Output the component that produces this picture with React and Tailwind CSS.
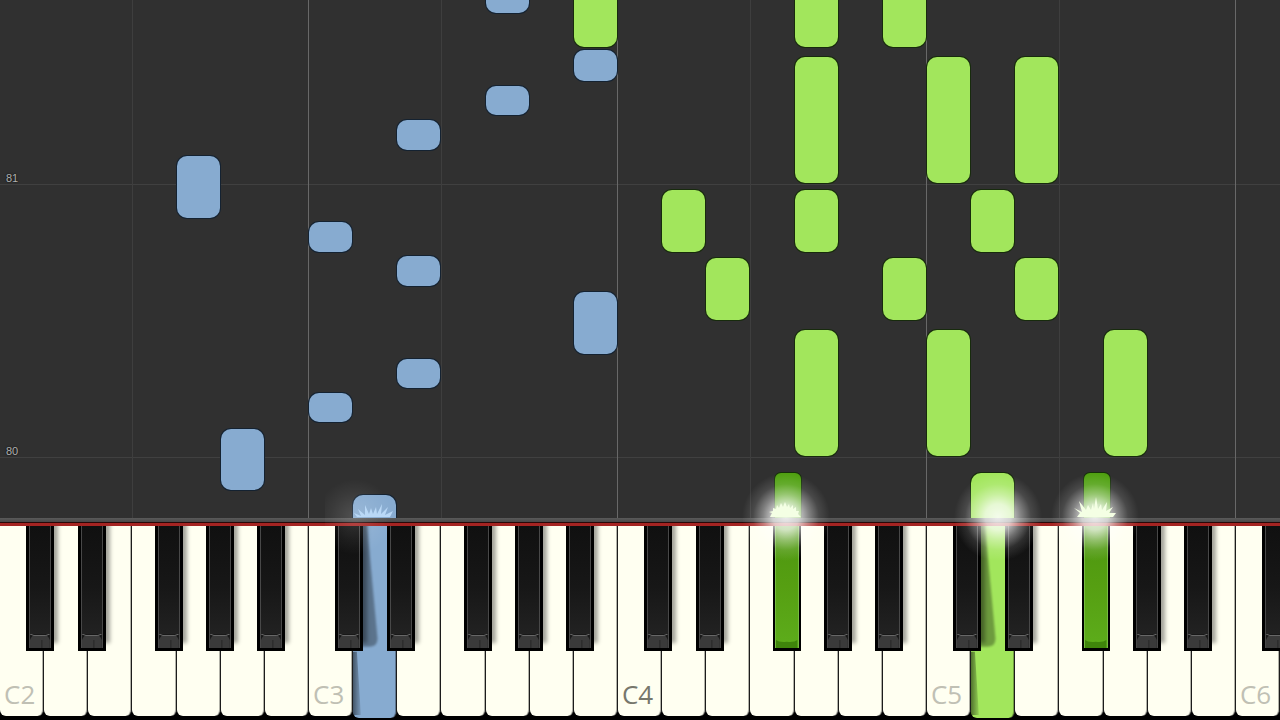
import React from 'react';

const KEY_COUNT = 29;
const LETTERS = ['C', 'D', 'E', 'F', 'G', 'A', 'B'];

const keys = Array.from({ length: KEY_COUNT }, (_, index) => ({
  index,
  letter: LETTERS[index % 7],
  octave: 2 + Math.floor(index / 7),
}));

// how far each black key is pushed over its white key
const SHARP_MARGIN = {
  C: 'ml-[59%]',
  D: 'ml-[77%]',
  F: 'ml-[52%]',
  G: 'ml-[67%]',
  A: 'ml-[83%]',
};

// bottom is the distance to the rail, in pixels
const notes = [
  { key: 11, bottom: 505, height: 40, hand: 'left' },
  { key: 13, bottom: 437, height: 31, hand: 'left' },
  { key: 11, bottom: 403, height: 29, hand: 'left' },
  { key: 9, bottom: 368, height: 30, hand: 'left' },
  { key: 4, bottom: 300, height: 62, hand: 'left' },
  { key: 7, bottom: 266, height: 30, hand: 'left' },
  { key: 9, bottom: 232, height: 30, hand: 'left' },
  { key: 13, bottom: 164, height: 62, hand: 'left' },
  { key: 9, bottom: 130, height: 29, hand: 'left' },
  { key: 7, bottom: 96, height: 29, hand: 'left' },
  { key: 5, bottom: 28, height: 61, hand: 'left' },
  { key: 8, bottom: -20, height: 43, hand: 'left' },
  { key: 13, bottom: 471, height: 80, hand: 'right' },
  { key: 18, bottom: 471, height: 80, hand: 'right' },
  { key: 20, bottom: 471, height: 80, hand: 'right' },
  { key: 18, bottom: 335, height: 126, hand: 'right' },
  { key: 21, bottom: 335, height: 126, hand: 'right' },
  { key: 23, bottom: 335, height: 126, hand: 'right' },
  { key: 15, bottom: 266, height: 62, hand: 'right' },
  { key: 18, bottom: 266, height: 62, hand: 'right' },
  { key: 22, bottom: 266, height: 62, hand: 'right' },
  { key: 16, bottom: 198, height: 62, hand: 'right' },
  { key: 20, bottom: 198, height: 62, hand: 'right' },
  { key: 23, bottom: 198, height: 62, hand: 'right' },
  { key: 18, bottom: 62, height: 126, hand: 'right' },
  { key: 21, bottom: 62, height: 126, hand: 'right' },
  { key: 25, bottom: 62, height: 126, hand: 'right' },
  { key: 22, bottom: -20, height: 65, hand: 'right' },
  { key: 17, bottom: -20, height: 65, hand: 'right', sharp: true },
  { key: 24, bottom: -20, height: 65, hand: 'right', sharp: true },
];

const pressedWhite = { 8: 'left', 22: 'right' };
const pressedBlack = [17, 24];

function Note({ note }) {
  let look = 'inset-x-[1%] rounded-[10px] bg-[#a2e65c] ring-[#172b0c]';
  if (note.hand === 'left') look = 'inset-x-[1%] rounded-[10px] bg-[#87abd0] ring-[#142231]';
  if (note.sharp) look = 'left-[56%] w-[58%] rounded-md bg-[#4fa010] ring-[#16300a]';

  return <div className={`absolute ring-1 ${look}`} style={{ bottom: note.bottom, height: note.height }} />;
}

function Lane({ item }) {
  let line = '';
  if (item.letter === 'B') line = 'border-r border-[#686868]';
  if (item.letter === 'E') line = 'border-r border-[#3e3e3e]';

  return (
    <div className={`relative flex-1 ${line}`}>
      {notes
        .filter((note) => note.key === item.index)
        .map((note, i) => (
          <Note key={i} note={note} />
        ))}
    </div>
  );
}

function Measure({ number }) {
  return (
    <div className="flex h-[273px] shrink-0 items-end border-b border-[#404040] pl-1.5 font-['Liberation_Sans'] text-[11px] leading-3 text-[#b0b0b0] [text-shadow:0_0_2px_#000]">
      {number}
    </div>
  );
}

function Roll() {
  return (
    <div className="relative min-h-0 flex-1 overflow-hidden bg-[#303030]">
      <div className="absolute inset-0 flex flex-col justify-end pb-[60px]">
        <Measure number="81" />
        <Measure number="80" />
      </div>
      <div className="flex h-full">
        {keys.map((item) => (
          <Lane key={item.index} item={item} />
        ))}
      </div>
    </div>
  );
}

function BlackKey({ letter, pressed }) {
  if (pressed) {
    return (
      <div className={`h-[125px] w-[62%] shrink-0 border-x-2 border-b-3 border-black bg-linear-to-b from-[#4c960f] via-[#569f12] to-[#5dad1b] ${SHARP_MARGIN[letter]}`}>
        <div className="flex h-full flex-col justify-end border-x border-[#76bd40]">
          <svg viewBox="0 0 20 9" preserveAspectRatio="none" className="h-2 w-full">
            <path d="M0 0Q3 3 10 2Q17 3 20 0V9H0Z" fill="#3f850b" />
          </svg>
        </div>
      </div>
    );
  }
  return (
    <div className={`h-[125px] w-[63%] shrink-0 border-x-3 border-b-3 border-black bg-linear-to-b from-[#101010] via-[#171717] to-[#252525] shadow-[5px_-7px_4px_-1px_rgba(0,0,0,0.36)] ${SHARP_MARGIN[letter]}`}>
      <div className="flex h-full flex-col justify-end border-x border-[#484848]">
        <svg viewBox="0 0 20 14" preserveAspectRatio="none" className="h-3.5 w-full">
          <path d="M0 0H20V14H0Z" fill="#181818" />
          <path d="M0 14V6Q2 1 5 1H15Q18 1 20 6V14Z" fill="#3a3a3a" />
          <path d="M0 0L4 1.5H16L20 0" fill="none" stroke="#686868" strokeWidth="1" />
          <path d="M12 6V14" stroke="#252525" strokeWidth="1" />
        </svg>
      </div>
    </div>
  );
}

function WhiteKey({ item }) {
  const { index, letter, octave } = item;
  const hand = pressedWhite[index];
  let color = 'mb-1 bg-[#fffff1]';
  if (hand === 'left') color = 'mb-0.5 bg-[#87abd0]';
  if (hand === 'right') color = 'mb-0.5 bg-[#a2e65c]';

  return (
    <div className={`relative flex min-w-0 flex-1 flex-col justify-end overflow-hidden rounded-b-md border-r border-[#1c1c1c] shadow-[inset_-1px_0_0_rgba(0,0,0,0.3)] ${color}`}>
      {hand && (
        <svg viewBox="0 0 44 191" preserveAspectRatio="none" className="absolute inset-0 h-full w-full">
          <defs>
            <linearGradient id={`lip-${index}`}>
              <stop offset="0" stopColor="#000" stopOpacity="0.5" />
              <stop offset="1" stopColor="#000" stopOpacity="0.1" />
            </linearGradient>
            <filter id={`soft-${index}`}>
              <feGaussianBlur stdDeviation="1" />
            </filter>
          </defs>
          <path d="M8 -4H14L25 112Q25 120 17 120H8Z" fill="#000" opacity="0.32" filter={`url(#soft-${index})`} />
          <path d="M0 125H4L8 188H0Z" fill={`url(#lip-${index})`} />
        </svg>
      )}
      {letter === 'C' && (
        <span className={`pb-1 pl-1 text-[26px] leading-9 ${octave === 4 ? 'text-[#77776c]' : 'text-[#c0c0b4]'}`}>
          C{octave}
        </span>
      )}
    </div>
  );
}

function Keyboard() {
  return (
    <div className="relative flex h-[194px] shrink-0 overflow-hidden bg-black">
      {keys.map((item) => (
        <WhiteKey key={item.index} item={item} />
      ))}
      <div className="absolute inset-0 flex">
        {keys.map(({ index, letter }) => (
          <div key={index} className="flex min-w-0 flex-1">
            {letter in SHARP_MARGIN && <BlackKey letter={letter} pressed={pressedBlack.includes(index)} />}
          </div>
        ))}
      </div>
    </div>
  );
}

const sparks = {
  burst: 'M6 40L8 36L5 35L9 34L9 31L12 32L13 28L15 31L17 26L19 30L21 25L23 30L25 27L26 31L29 28L29 32L32 30L32 34L35 34L34 37L37 40Z',
  crown: 'M4 40L7 36L1 31L9 35L6 24L13 33L15 28L18 33L20 26L21 32L23 20L25 32L28 27L29 33L34 25L33 34L40 30L36 36L43 36L40 40Z',
  fan: 'M4 40L1 36L8 39L5 32L12 38L12 28L16 37L18 31L20 37L23 30L24 37L29 27L28 37L35 30L32 38L40 34L37 40Z',
};

// light where a note meets the keyboard
function Flare({ position, shape, faint }) {
  return (
    <div
      className="pointer-events-none absolute bottom-[153px] flex h-[100px] w-[100px] -translate-x-1/2 flex-col items-center pt-2.5"
      style={{ left: `${(position / KEY_COUNT) * 100}%` }}
    >
      {faint ? (
        <div className="absolute inset-0 bg-[radial-gradient(circle_at_30%_50%,rgba(255,255,255,0.16),rgba(255,255,255,0.05)_28%,transparent_44%)]" />
      ) : (
        <div className="absolute inset-0 bg-[radial-gradient(circle_closest-side,rgba(255,255,255,0.88),rgba(255,255,255,0.74)_26%,rgba(255,255,255,0.4)_46%,rgba(255,255,255,0.12)_66%,transparent_88%)]" />
      )}
      {shape && (
        <svg viewBox="0 0 44 44" className="relative h-11 w-11">
          <path d={sparks[shape]} fill={faint ? '#b9d8f6' : '#f4ffe4'} />
        </svg>
      )}
    </div>
  );
}

export default function App() {
  return (
    <main className="relative flex h-screen flex-col overflow-hidden bg-black font-['Open_Sans',sans-serif]">
      <Roll />
      <div className="h-1 shrink-0 bg-linear-to-b from-[#5a5a5a] to-[#484848]" />
      <div className="h-1 shrink-0 border-t border-[#2a0808] bg-[#a52422]" />
      <Keyboard />
      <Flare position={8.5} shape="fan" faint />
      <Flare position={17.8} shape="burst" />
      <Flare position={22.6} />
      <Flare position={24.8} shape="crown" />
    </main>
  );
}
